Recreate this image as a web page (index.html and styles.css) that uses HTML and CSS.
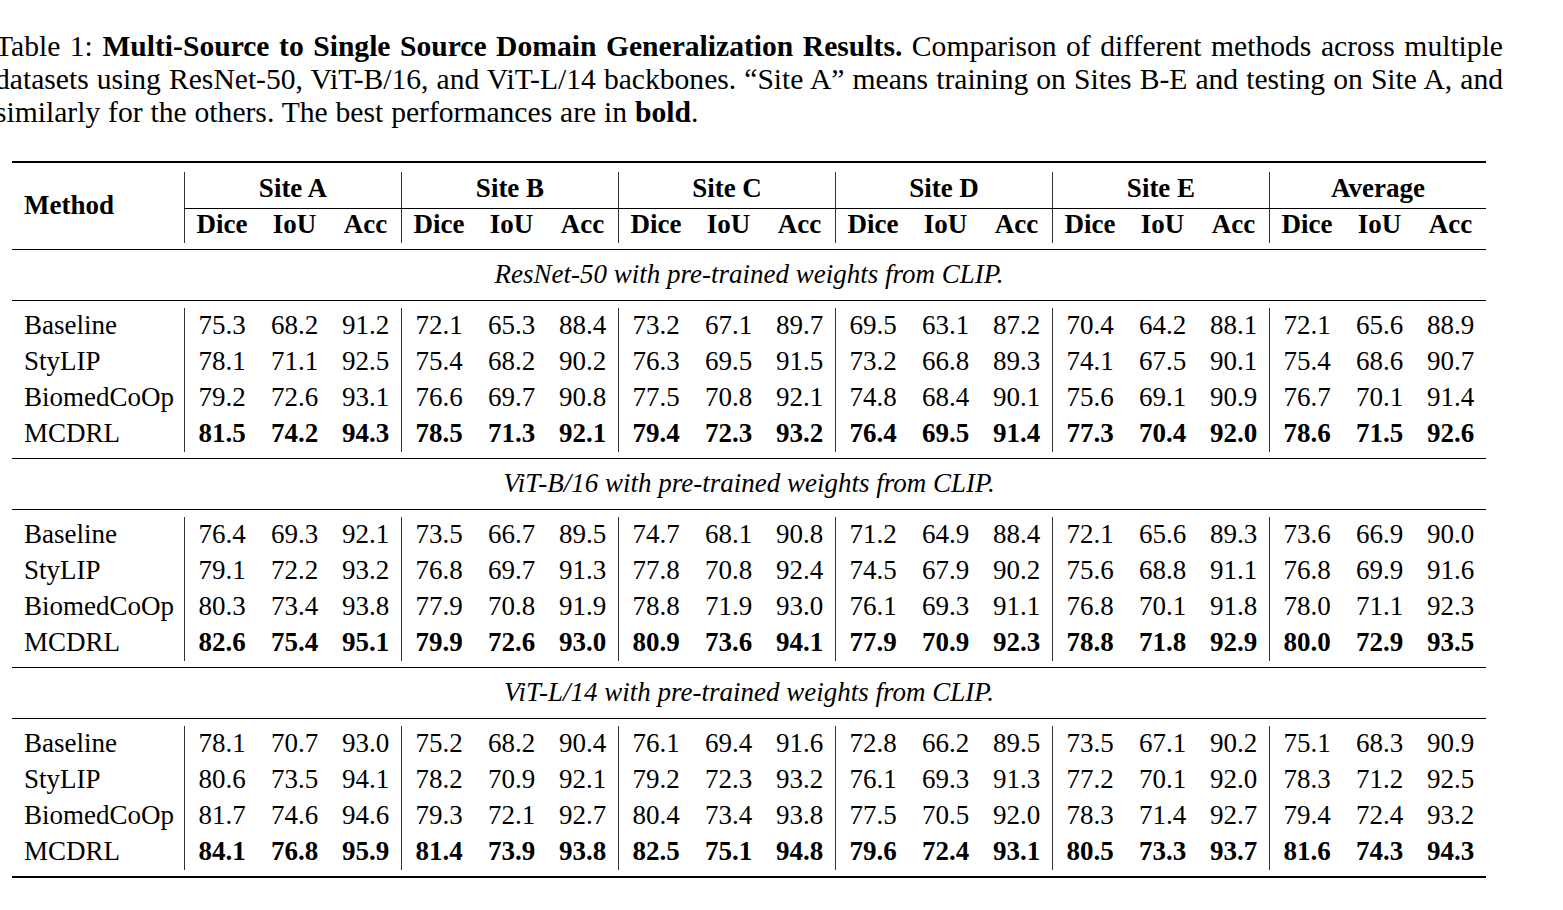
FILE: index.html
```html
<!DOCTYPE html>
<html lang="en">
<head>
<meta charset="utf-8">
<title>Table 1</title>
<link rel="stylesheet" href="styles.css">
</head>
<body>
<div class="caption">
  <div class="ln">Table 1: <b>Multi-Source to Single Source Domain Generalization Results.</b> Comparison of different methods across multiple</div>
  <div class="ln">datasets using ResNet-50, ViT-B/16, and ViT-L/14 backbones. “Site A” means training on Sites B-E and testing on Site A, and</div>
  <div class="ln last">similarly for the others. The best performances are in <b>bold</b>.</div>
</div>
<table class="results">
  <colgroup>
    <col class="c-method">
    <col class="c-dice"><col class="c-iou"><col class="c-acc">
    <col class="c-dice"><col class="c-iou"><col class="c-acc">
    <col class="c-dice"><col class="c-iou"><col class="c-acc">
    <col class="c-dice"><col class="c-iou"><col class="c-acc">
    <col class="c-dice"><col class="c-iou"><col class="c-acc">
    <col class="c-dice"><col class="c-iou"><col class="c-acc">
  </colgroup>
  <tbody>
    <tr class="rule thick"><td colspan="19"></td></tr>
    <tr class="sp sp-top"><td colspan="19"></td></tr>
    <tr class="h1">
      <th class="method" rowspan="2">Method</th>
      <th class="site" colspan="3">Site A</th>
      <th class="site" colspan="3">Site B</th>
      <th class="site" colspan="3">Site C</th>
      <th class="site" colspan="3">Site D</th>
      <th class="site" colspan="3">Site E</th>
      <th class="site" colspan="3">Average</th>
    </tr>
    <tr class="h2">
      <th class="g">Dice</th><th>IoU</th><th>Acc</th>
      <th class="g">Dice</th><th>IoU</th><th>Acc</th>
      <th class="g">Dice</th><th>IoU</th><th>Acc</th>
      <th class="g">Dice</th><th>IoU</th><th>Acc</th>
      <th class="g">Dice</th><th>IoU</th><th>Acc</th>
      <th class="g">Dice</th><th>IoU</th><th>Acc</th>
    </tr>
    <tr class="sp sp-6"><td colspan="19"></td></tr>
    <tr class="rule"><td colspan="19"></td></tr>
    <tr class="section"><td colspan="19">ResNet-50 with pre-trained weights from CLIP.</td></tr>
    <tr class="rule"><td colspan="19"></td></tr>
    <tr class="sp sp-7"><td colspan="19"></td></tr>
    <tr class="row"><td class="name">Baseline</td><td class="g">75.3</td><td>68.2</td><td>91.2</td><td class="g">72.1</td><td>65.3</td><td>88.4</td><td class="g">73.2</td><td>67.1</td><td>89.7</td><td class="g">69.5</td><td>63.1</td><td>87.2</td><td class="g">70.4</td><td>64.2</td><td>88.1</td><td class="g">72.1</td><td>65.6</td><td>88.9</td></tr>
    <tr class="row"><td class="name">StyLIP</td><td class="g">78.1</td><td>71.1</td><td>92.5</td><td class="g">75.4</td><td>68.2</td><td>90.2</td><td class="g">76.3</td><td>69.5</td><td>91.5</td><td class="g">73.2</td><td>66.8</td><td>89.3</td><td class="g">74.1</td><td>67.5</td><td>90.1</td><td class="g">75.4</td><td>68.6</td><td>90.7</td></tr>
    <tr class="row"><td class="name">BiomedCoOp</td><td class="g">79.2</td><td>72.6</td><td>93.1</td><td class="g">76.6</td><td>69.7</td><td>90.8</td><td class="g">77.5</td><td>70.8</td><td>92.1</td><td class="g">74.8</td><td>68.4</td><td>90.1</td><td class="g">75.6</td><td>69.1</td><td>90.9</td><td class="g">76.7</td><td>70.1</td><td>91.4</td></tr>
    <tr class="row best"><td class="name">MCDRL</td><td class="g">81.5</td><td>74.2</td><td>94.3</td><td class="g">78.5</td><td>71.3</td><td>92.1</td><td class="g">79.4</td><td>72.3</td><td>93.2</td><td class="g">76.4</td><td>69.5</td><td>91.4</td><td class="g">77.3</td><td>70.4</td><td>92.0</td><td class="g">78.6</td><td>71.5</td><td>92.6</td></tr>
    <tr class="sp sp-6"><td colspan="19"></td></tr>
    <tr class="rule"><td colspan="19"></td></tr>
    <tr class="section"><td colspan="19">ViT-B/16 with pre-trained weights from CLIP.</td></tr>
    <tr class="rule"><td colspan="19"></td></tr>
    <tr class="sp sp-7"><td colspan="19"></td></tr>
    <tr class="row"><td class="name">Baseline</td><td class="g">76.4</td><td>69.3</td><td>92.1</td><td class="g">73.5</td><td>66.7</td><td>89.5</td><td class="g">74.7</td><td>68.1</td><td>90.8</td><td class="g">71.2</td><td>64.9</td><td>88.4</td><td class="g">72.1</td><td>65.6</td><td>89.3</td><td class="g">73.6</td><td>66.9</td><td>90.0</td></tr>
    <tr class="row"><td class="name">StyLIP</td><td class="g">79.1</td><td>72.2</td><td>93.2</td><td class="g">76.8</td><td>69.7</td><td>91.3</td><td class="g">77.8</td><td>70.8</td><td>92.4</td><td class="g">74.5</td><td>67.9</td><td>90.2</td><td class="g">75.6</td><td>68.8</td><td>91.1</td><td class="g">76.8</td><td>69.9</td><td>91.6</td></tr>
    <tr class="row"><td class="name">BiomedCoOp</td><td class="g">80.3</td><td>73.4</td><td>93.8</td><td class="g">77.9</td><td>70.8</td><td>91.9</td><td class="g">78.8</td><td>71.9</td><td>93.0</td><td class="g">76.1</td><td>69.3</td><td>91.1</td><td class="g">76.8</td><td>70.1</td><td>91.8</td><td class="g">78.0</td><td>71.1</td><td>92.3</td></tr>
    <tr class="row best"><td class="name">MCDRL</td><td class="g">82.6</td><td>75.4</td><td>95.1</td><td class="g">79.9</td><td>72.6</td><td>93.0</td><td class="g">80.9</td><td>73.6</td><td>94.1</td><td class="g">77.9</td><td>70.9</td><td>92.3</td><td class="g">78.8</td><td>71.8</td><td>92.9</td><td class="g">80.0</td><td>72.9</td><td>93.5</td></tr>
    <tr class="sp sp-6"><td colspan="19"></td></tr>
    <tr class="rule"><td colspan="19"></td></tr>
    <tr class="section"><td colspan="19">ViT-L/14 with pre-trained weights from CLIP.</td></tr>
    <tr class="rule"><td colspan="19"></td></tr>
    <tr class="sp sp-7"><td colspan="19"></td></tr>
    <tr class="row"><td class="name">Baseline</td><td class="g">78.1</td><td>70.7</td><td>93.0</td><td class="g">75.2</td><td>68.2</td><td>90.4</td><td class="g">76.1</td><td>69.4</td><td>91.6</td><td class="g">72.8</td><td>66.2</td><td>89.5</td><td class="g">73.5</td><td>67.1</td><td>90.2</td><td class="g">75.1</td><td>68.3</td><td>90.9</td></tr>
    <tr class="row"><td class="name">StyLIP</td><td class="g">80.6</td><td>73.5</td><td>94.1</td><td class="g">78.2</td><td>70.9</td><td>92.1</td><td class="g">79.2</td><td>72.3</td><td>93.2</td><td class="g">76.1</td><td>69.3</td><td>91.3</td><td class="g">77.2</td><td>70.1</td><td>92.0</td><td class="g">78.3</td><td>71.2</td><td>92.5</td></tr>
    <tr class="row"><td class="name">BiomedCoOp</td><td class="g">81.7</td><td>74.6</td><td>94.6</td><td class="g">79.3</td><td>72.1</td><td>92.7</td><td class="g">80.4</td><td>73.4</td><td>93.8</td><td class="g">77.5</td><td>70.5</td><td>92.0</td><td class="g">78.3</td><td>71.4</td><td>92.7</td><td class="g">79.4</td><td>72.4</td><td>93.2</td></tr>
    <tr class="row best"><td class="name">MCDRL</td><td class="g">84.1</td><td>76.8</td><td>95.9</td><td class="g">81.4</td><td>73.9</td><td>93.8</td><td class="g">82.5</td><td>75.1</td><td>94.8</td><td class="g">79.6</td><td>72.4</td><td>93.1</td><td class="g">80.5</td><td>73.3</td><td>93.7</td><td class="g">81.6</td><td>74.3</td><td>94.3</td></tr>
    <tr class="sp sp-6"><td colspan="19"></td></tr>
    <tr class="rule thick"><td colspan="19"></td></tr>
  </tbody>
</table>
</body>
</html>
```
FILE: styles.css
```css
html, body {
  margin: 0;
  padding: 0;
  background: #ffffff;
  color: #000000;
  font-family: "Liberation Serif", "Times New Roman", serif;
}

.caption {
  margin: 30px 0 0 -5px;
  width: 1508px;
  height: 99px;
  font-size: 29.6px;
  line-height: 33px;
  word-spacing: -3px;
}

.caption .ln {
  text-align: justify;
  text-align-last: justify;
}

.caption .ln.last {
  text-align-last: left;
  word-spacing: 0.5px;
}

.results {
  margin: 32px 0 0 12px;
  width: 1474px;
  table-layout: fixed;
  border-collapse: separate;
  border-spacing: 0;
  font-size: 27px;
}

.c-method { width: 172px; }
.c-dice { width: 75px; }
.c-iou { width: 71px; }
.c-acc { width: 71px; }

.results th,
.results td {
  padding: 0;
  text-align: center;
  vertical-align: middle;
  white-space: nowrap;
  box-sizing: border-box;
}

.results th {
  font-weight: bold;
}

/* rules (booktabs) */
.rule td {
  height: 0;
  font-size: 0;
  line-height: 0;
  border-top: 1px solid #000;
}

.rule.thick td {
  border-top-width: 2px;
}

/* spacers between rules and vertical lines */
.sp td {
  font-size: 0;
  line-height: 0;
}

.sp-top td { height: 9px; }
.sp-6 td { height: 6px; }
.sp-7 td { height: 7px; }

/* header */
.h1 th {
  height: 36px;
  line-height: 32px;
}

.h1 th.site {
  border-left: 1px solid #333;
  border-bottom: 1px solid #000;
  padding-bottom: 4px;
}

.h1 th.method {
  text-align: left;
  padding-left: 12px;
  padding-bottom: 6px;
}

.h2 th {
  height: 34px;
  line-height: 31px;
  padding-bottom: 3px;
}

.g {
  border-left: 1px solid #333;
}

/* section titles */
.section td {
  height: 50px;
  line-height: 49px;
  padding-bottom: 1px;
  font-style: italic;
}

/* data rows */
.row td {
  height: 36px;
  line-height: 34px;
  padding-bottom: 2px;
}

.row td.name {
  text-align: left;
  padding-left: 12px;
}

.row.best td {
  font-weight: bold;
}

.row.best td.name {
  font-weight: normal;
}
```
